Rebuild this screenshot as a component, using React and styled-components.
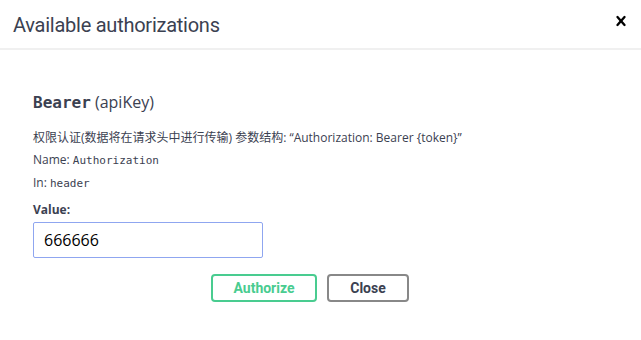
import React, { useState } from "react";
import styled, { createGlobalStyle } from "styled-components";

const GlobalStyle = createGlobalStyle`
    html, body {
        margin: 0;
        padding: 0;
        background: #fff;
    }
    body {
        font-family: "Open Sans", "Noto Sans CJK SC", sans-serif;
        color: #3b4151;
    }
`;

function CloseIcon() {
    return (
        <svg width="20" height="20" viewBox="0 0 20 20" aria-hidden="true">
            <path
                fill="#000"
                d="M14.348 14.849a1.2 1.2 0 0 1-1.697 0L10 11.819l-2.651 3.029a1.2 1.2 0 1 1-1.697-1.697l2.758-3.15-2.759-3.152a1.2 1.2 0 1 1 1.697-1.697L10 8.183l2.651-3.031a1.2 1.2 0 1 1 1.697 1.697l-2.758 3.152 2.758 3.15a1.2 1.2 0 0 1 0 1.698z"
            />
        </svg>
    );
}

function App() {
    const [value, setValue] = useState("666666");

    return (
        <Modal>
            <GlobalStyle />
            <Header>
                <Title>Available authorizations</Title>
                <CloseButton type="button">
                    <CloseIcon />
                </CloseButton>
            </Header>
            <Content>
                <AuthForm>
                    <SchemeTitle>
                        <Code>Bearer</Code> (apiKey)
                    </SchemeTitle>
                    <InfoList>
                        <Info>权限认证(数据将在请求头中进行传输) 参数结构: “Authorization: Bearer {"{token}"}”</Info>
                        <Info>
                            Name: <Mono>Authorization</Mono>
                        </Info>
                        <Info>
                            In: <Mono>header</Mono>
                        </Info>
                    </InfoList>
                    <Label>Value:</Label>
                    <Input
                        type="text"
                        value={value}
                        onChange={(e) => setValue(e.target.value)}
                    />
                    <ButtonRow>
                        <Button variant="authorize">Authorize</Button>
                        <Button>Close</Button>
                    </ButtonRow>
                </AuthForm>
            </Content>
        </Modal>
    );
}
export default App;

const Modal = styled.div`
    width: 641px;
    height: 340px;
    background: #fff;
`;
const Header = styled.div`
    height: 50px;
    display: flex;
    align-items: center;
    justify-content: space-between;
    padding: 0 10px 0 13px;
    box-sizing: border-box;
    border-bottom: 2px solid #f0f0f0;
`;
const Title = styled.h3`
    margin: 0;
    font-family: "Roboto", sans-serif;
    font-size: 20px;
    font-weight: 400;
    letter-spacing: -0.25px;
    color: #3b4151;
    padding-top: 2px;
`;
const CloseButton = styled.button`
    border: none;
    background: none;
    padding: 0;
    display: flex;
    margin-top: -6px;
    cursor: pointer;
`;
const Content = styled.div`
    padding: 38px 33px 0;
`;
const AuthForm = styled.div`
    display: flex;
    flex-direction: column;
`;
const SchemeTitle = styled.h4`
    margin: 0;
    font-size: 16px;
    font-weight: 400;
    line-height: 28px;
    color: #3b4151;
`;
const Code = styled.code`
    font-family: "DejaVu Sans Mono", monospace;
    font-weight: 700;
    font-size: 16px;
`;
const InfoList = styled.div`
    margin-top: 13px;
    display: flex;
    flex-direction: column;
    gap: 6px;
`;
const Info = styled.p`
    margin: 0;
    font-size: 12px;
    line-height: 16px;
    color: #3b4151;
`;
const Mono = styled.span`
    font-family: "DejaVu Sans Mono", monospace;
    font-size: 11px;
`;
const Label = styled.label`
    margin-top: 10px;
    font-size: 12px;
    font-weight: 700;
    line-height: 16px;
    color: #3b4151;
`;
const Input = styled.input`
    margin-top: 4px;
    width: 230px;
    height: 36px;
    box-sizing: border-box;
    padding: 0 10px;
    border: 1px solid #8fa6f0;
    border-radius: 2px;
    font-family: "Open Sans", sans-serif;
    font-size: 16px;
    color: #000;
    outline: none;
`;
const ButtonRow = styled.div`
    margin-top: 16px;
    display: flex;
    gap: 10px;
    padding-left: 178px;
`;
const Button = styled.button`
    width: ${(p) => (p.variant === "authorize" ? "106px" : "82px")};
    height: 28px;
    box-sizing: border-box;
    border: 2px solid ${(p) => (p.variant === "authorize" ? "#49cc90" : "#888")};
    border-radius: 4px;
    background: transparent;
    font-family: "Roboto", sans-serif;
    font-size: 14px;
    font-weight: 700;
    color: ${(p) => (p.variant === "authorize" ? "#49cc90" : "#3b4151")};
    cursor: pointer;
`;
